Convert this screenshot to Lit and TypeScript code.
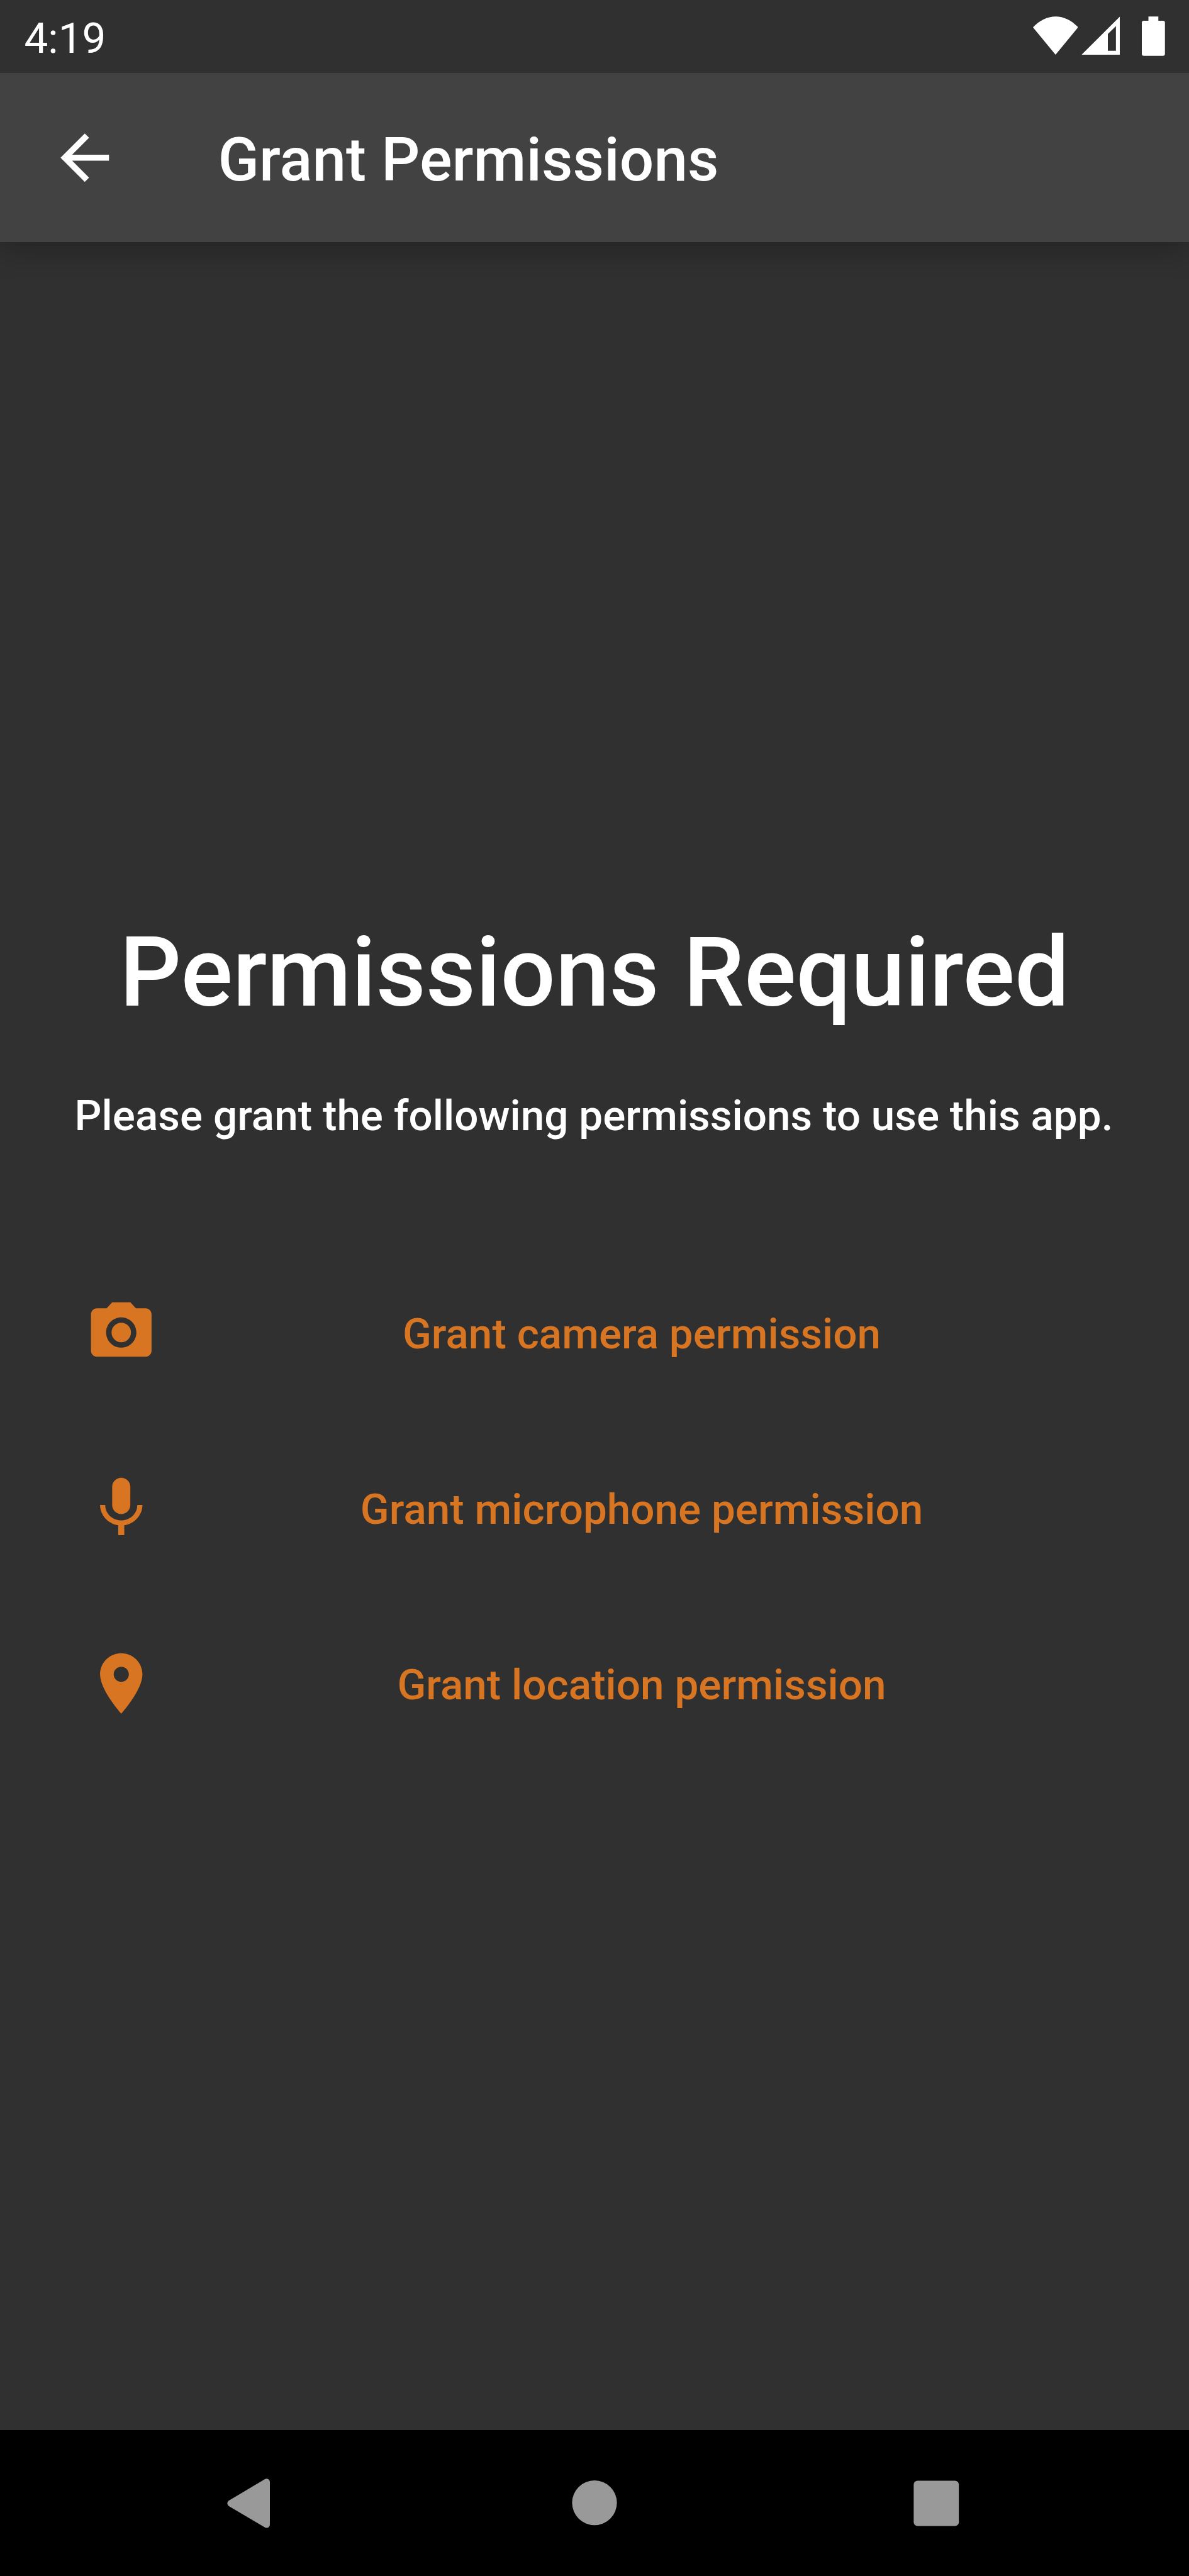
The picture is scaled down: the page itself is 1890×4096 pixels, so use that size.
import { LitElement, html, css, svg } from "lit";
import { customElement } from "lit/decorators.js";

const CAMERA = svg`<circle cx="12" cy="12" r="3.2"/><path d="M9 2L7.17 4H4c-1.1 0-2 .9-2 2v12c0 1.1.9 2 2 2h16c1.1 0 2-.9 2-2V6c0-1.1-.9-2-2-2h-3.17L15 2H9zm3 15c-2.76 0-5-2.24-5-5s2.24-5 5-5 5 2.24 5 5-2.24 5-5 5z"/>`;
const MIC = svg`<path d="M12 14c1.66 0 2.99-1.34 2.99-3L15 5c0-1.66-1.34-3-3-3S9 3.34 9 5v6c0 1.66 1.34 3 3 3zm5.3-3c0 3-2.54 5.1-5.3 5.1S6.7 14 6.7 11H5c0 3.41 2.72 6.23 6 6.72V21h2v-3.28c3.28-.48 6-3.3 6-6.72h-1.7z"/>`;
const PIN = svg`<path d="M12 2C8.13 2 5 5.13 5 9c0 5.25 7 13 7 13s7-7.75 7-13c0-3.87-3.13-7-7-7zm0 9.5c-1.38 0-2.5-1.12-2.5-2.5s1.12-2.5 2.5-2.5 2.5 1.12 2.5 2.5-1.12 2.5-2.5 2.5z"/>`;

const PERMISSIONS = [
  { icon: CAMERA, label: "Grant camera permission" },
  { icon: MIC, label: "Grant microphone permission" },
  { icon: PIN, label: "Grant location permission" },
];

@customElement("app-root")
export class AppRoot extends LitElement {
  static styles = css`
    :host {
      --dp: 4.8125px;
      display: flex;
      flex-direction: column;
      width: 1890px;
      height: 4096px;
      overflow: hidden;
      background: #303030;
      color: #fff;
      font-family: Roboto, sans-serif;
    }
    svg {
      display: block;
      fill: currentColor;
      flex: none;
    }
    .status {
      flex: none;
      box-sizing: border-box;
      height: calc(24 * var(--dp));
      padding: 0 calc(8 * var(--dp));
      display: flex;
      justify-content: space-between;
      font-size: calc(14 * var(--dp));
    }
    .clock {
      line-height: 122px;
    }
    .indicators {
      display: flex;
    }
    .indicators svg {
      height: 115.5px;
    }
    .wifi {
      width: 71.75px;
      margin-right: 5.25px;
    }
    .signal {
      width: 61.25px;
      margin-right: 35px;
    }
    .battery {
      width: 36.75px;
    }
    .bar {
      flex: none;
      height: calc(56 * var(--dp));
      display: flex;
      align-items: center;
      background: #424242;
      box-shadow: 0 14px 44px rgba(0, 0, 0, 0.24);
      clip-path: inset(0 0 -100px 0);
    }
    .glyph {
      width: calc(24 * var(--dp));
      height: calc(24 * var(--dp));
    }
    .back {
      margin: 0 calc(32 * var(--dp)) 0 calc(16 * var(--dp));
    }
    .title {
      margin: 8px 0 0;
      font-size: calc(20 * var(--dp));
      font-weight: 500;
      line-height: 116px;
      letter-spacing: 0.04px;
      white-space: nowrap;
    }
    .body {
      flex: 1;
      display: flex;
      flex-direction: column;
      padding-top: 1072px;
    }
    .heading {
      margin: 0;
      font-size: calc(32 * var(--dp));
      font-weight: 500;
      line-height: 180px;
      text-align: center;
      white-space: nowrap;
    }
    .lead {
      margin: 92px 0 0;
      padding-right: 2px;
      font-size: calc(14 * var(--dp));
      font-weight: 500;
      line-height: 90px;
      letter-spacing: 0.04px;
      text-align: center;
      white-space: nowrap;
    }
    .list {
      margin-top: 160px;
      padding: 0 calc(20 * var(--dp)) 0 calc(28 * var(--dp));
    }
    .row {
      height: 279px;
      display: flex;
      align-items: center;
      color: #d87522;
    }
    .label {
      flex: 1;
      margin-top: 4px;
      padding-right: 4px;
      text-align: center;
      font-size: calc(14 * var(--dp));
      font-weight: 500;
      line-height: 80px;
      letter-spacing: 0.04px;
      white-space: nowrap;
    }
    .nav {
      flex: none;
      height: 232px;
      display: flex;
      align-items: center;
      background: #000;
      color: #999;
    }
    .key {
      width: 84px;
      height: 84px;
    }
    .key-back {
      margin-left: 351.75px;
      stroke: currentColor;
      stroke-width: 12;
      stroke-linejoin: round;
    }
    .key-home {
      margin: 0 459.4px 0 467.25px;
    }
  `;

  render() {
    return html`
      <div class="status">
        <span class="clock">4:19</span>
        <div class="indicators">
          <svg class="wifi" viewBox="1876 0 82 132">
            <path d="M1917 99.5L1876 49.6C1888 37 1902 30 1917 30S1946 37 1958 49.6Z" />
          </svg>
          <svg class="signal" viewBox="1964 0 70 132">
            <path fill-rule="evenodd" d="M2033.7 30.3V99.5H1964.3ZM2026.7 47.5L2012 61.8V92.3H2026.7Z" />
          </svg>
          <svg class="battery" viewBox="2074 0 42 132">
            <path d="M2086 30H2104V37.7H2112.5Q2116 37.7 2116 41.2V98Q2116 101.5 2112.5 101.5H2077.5Q2074 101.5 2074 98V41.2Q2074 37.7 2077.5 37.7H2086Z" />
          </svg>
        </div>
      </div>
      <header class="bar">
        <svg class="glyph back" viewBox="0 0 24 24">
          <path d="M20 11H7.83l5.59-5.59L12 4l-8 8 8 8 1.41-1.41L7.83 13H20v-2z" />
        </svg>
        <h1 class="title">Grant Permissions</h1>
      </header>
      <main class="body">
        <h2 class="heading">Permissions Required</h2>
        <p class="lead">Please grant the following permissions to use this app.</p>
        <div class="list">
          ${PERMISSIONS.map(
            (p) => html`<div class="row">
              <svg class="glyph" viewBox="0 0 24 24">${p.icon}</svg>
              <span class="label">${p.label}</span>
            </div>`
          )}
        </div>
      </main>
      <nav class="nav">
        <svg class="key key-back" viewBox="402 4500.5 96 96"><path d="M484 4510.3V4587.7L418.700 4549Z" /></svg>
        <svg class="key key-home" viewBox="1032 4500.5 96 96"><circle cx="1080" cy="4548" r="40.7" /></svg>
        <svg class="key" viewBox="1653 4500.5 96 96"><rect x="1660.3" y="4508" width="82" height="82.3" rx="7" /></svg>
      </nav>
    `;
  }
}
